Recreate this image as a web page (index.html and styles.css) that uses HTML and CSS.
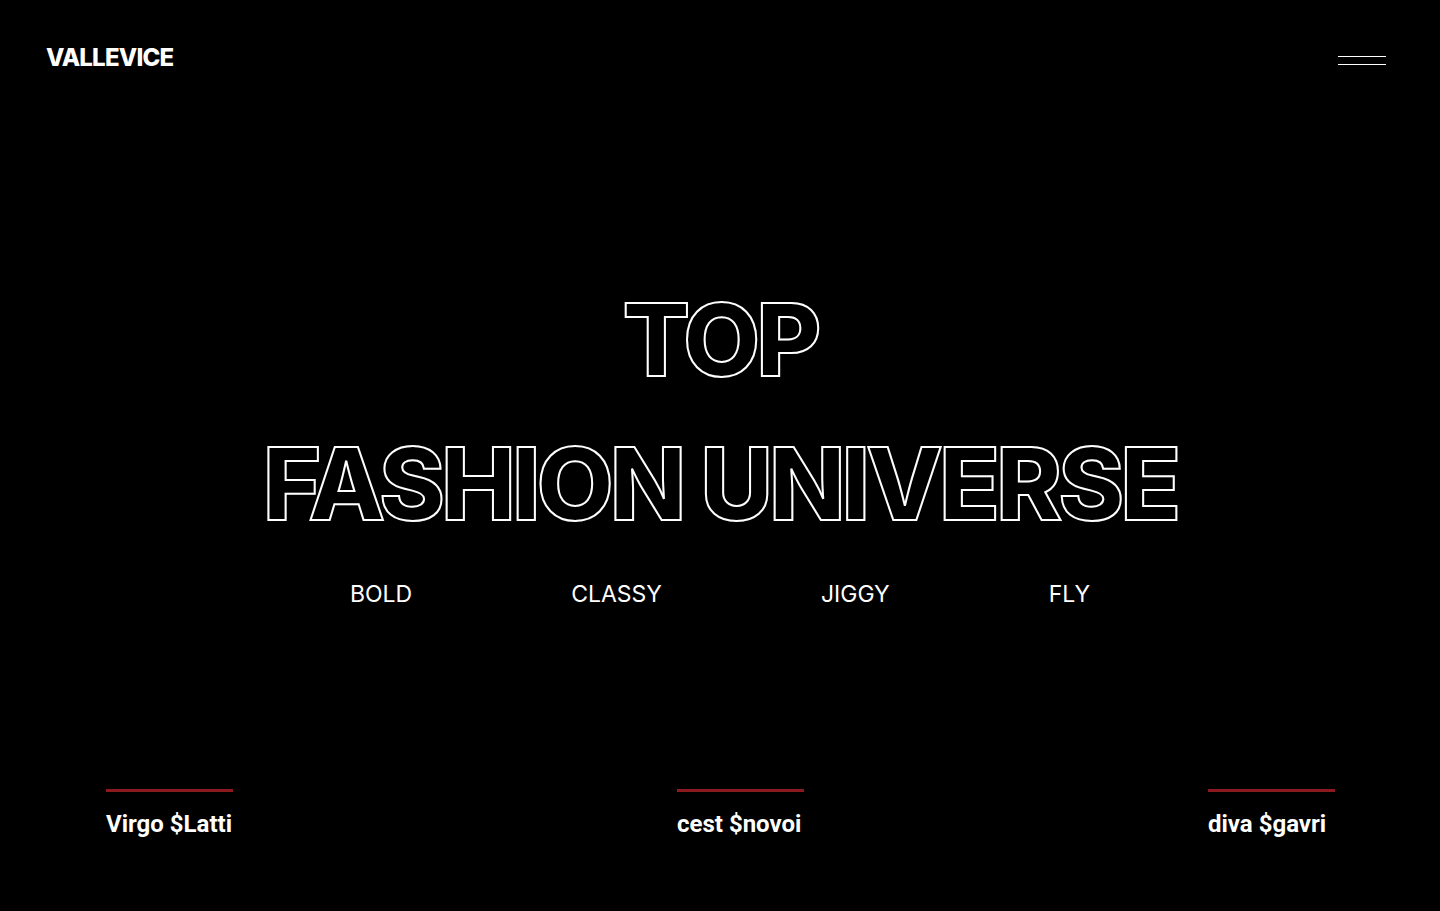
FILE: index.html
```html
<!DOCTYPE html>
<html lang="en">
<head>
<meta charset="utf-8">
<title>Vallevice</title>
<link rel="stylesheet" href="styles.css">
</head>
<body>
<div class="page">
  <header class="header">
    <div class="logo">VALLEVICE</div>
    <button class="burger" aria-label="Menu">
      <span class="burger-line"></span>
      <span class="burger-line"></span>
    </button>
  </header>
  <main class="hero">
    <h1 class="title">
      <span class="title-line">TOP</span>
      <span class="title-line">FASHION UNIVERSE</span>
    </h1>
    <ul class="tags">
      <li class="tag">BOLD</li>
      <li class="tag">CLASSY</li>
      <li class="tag">JIGGY</li>
      <li class="tag">FLY</li>
    </ul>
  </main>
  <footer class="models">
    <div class="model">
      <span class="model-bar"></span>
      <span class="model-name">Virgo $Latti</span>
    </div>
    <div class="model model-middle">
      <span class="model-bar"></span>
      <span class="model-name">cest $novoi</span>
    </div>
    <div class="model">
      <span class="model-bar"></span>
      <span class="model-name">diva $gavri</span>
    </div>
  </footer>
</div>
</body>
</html>
```
FILE: styles.css
```css
* { box-sizing: border-box; }
html, body { margin: 0; padding: 0; background: #000; }
body { color: #fff; font-family: "Inter", "Roboto", sans-serif; }
.page { height: 911px; display: flex; flex-direction: column; overflow: hidden; }

.header {
  display: flex;
  justify-content: space-between;
  align-items: center;
  padding: 40px 54px 0 46px;
  height: 76px;
}
.logo {
  font-family: "Inter", sans-serif;
  font-weight: 800;
  font-size: 24px;
  line-height: 36px;
  letter-spacing: -0.8px;
}
.burger {
  background: none;
  border: 0;
  padding: 0;
  width: 48px;
  display: flex;
  flex-direction: column;
  gap: 7px;
  margin-top: 4px;
}
.burger-line { display: block; height: 1px; background: #fff; width: 48px; }

.hero {
  display: flex;
  flex-direction: column;
  align-items: center;
  padding-top: 192px;
}
.title {
  margin: 0;
  display: flex;
  flex-direction: column;
  align-items: center;
  font-family: "Inter", sans-serif;
  font-weight: 800;
  font-size: 100px;
  line-height: 144px;
  color: #000;
  -webkit-text-stroke: 2px #fff;
  letter-spacing: -4px;
}
.title-line { display: block; }
.tags {
  list-style: none;
  margin: 23px 0 0;
  padding: 0;
  display: flex;
  gap: 159px;
  font-family: "Inter", sans-serif;
  font-weight: 400;
  font-size: 23px;
  line-height: 30px;
}

.models {
  margin-top: auto;
  display: flex;
  justify-content: space-between;
  padding: 0 105px 73px 106px;
}
.model { display: flex; flex-direction: column; width: 127px; }
.model-middle { margin-left: 40px; }
.model-bar { display: block; height: 3px; background: #8b1a1e; width: 127px; }
.model-name {
  margin-top: 18px;
  font-family: "Roboto", sans-serif;
  font-weight: 700;
  font-size: 24px;
  line-height: 28px;
  white-space: nowrap;
}
```
